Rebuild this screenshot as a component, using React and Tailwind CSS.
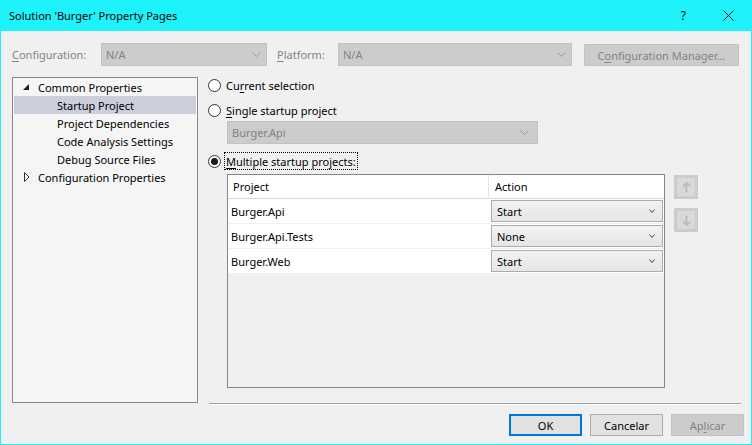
import React from "react";

function Chevron({ color = "#8a8a8a", w = 9, h = 5 }) {
  return (
    <svg width={w} height={h} viewBox={`0 0 ${w} ${h}`}>
      <polyline points={`0.5,0.5 ${w / 2},${h - 0.5} ${w - 0.5},0.5`} fill="none" stroke={color} strokeWidth="1" />
    </svg>
  );
}

function U({ children }) {
  return <span className="underline underline-offset-[2px] decoration-1">{children}</span>;
}

function Radio({ checked }) {
  return (
    <span className="w-[13px] h-[13px] rounded-full border border-[#333333] bg-white flex items-center justify-center shrink-0">
      {checked && <span className="w-[7px] h-[7px] rounded-full bg-[#1a1a1a]" />}
    </span>
  );
}

function DisabledCombo({ text, w }) {
  return (
    <div className={`${w} h-[23px] bg-[#cccccc] border border-[#c2c2c2] flex items-center pl-[4px] pr-[5px] text-[#838383]`}>
      <span>{text}</span>
      <span className="ml-auto flex"><Chevron color="#9a9a9a" /></span>
    </div>
  );
}

function ActionDrop({ text }) {
  return (
    <div className="ml-[2px] w-[172px] h-[22px] border border-[#acacac] bg-gradient-to-b from-[#f2f2f2] to-[#e5e5e5] flex items-center pl-[5px] pr-[7px]">
      <span>{text}</span>
      <span className="ml-auto flex"><Chevron color="#444444" w={6} h={4} /></span>
    </div>
  );
}

function Row({ name, action }) {
  return (
    <div className="h-[25px] bg-white border-b border-[#efefef] flex items-center">
      <div className="w-[261px] pl-[3px]">{name}</div>
      <ActionDrop text={action} />
    </div>
  );
}

function ArrowBtn({ up }) {
  return (
    <div className="w-[24px] h-[24px] bg-[#cccccc] flex items-center justify-center">
      <div className="w-[18px] h-[18px] bg-[#d9d9d9] flex items-center justify-center">
        <svg width="9" height="11" viewBox="0 0 9 11" style={{ transform: up ? "none" : "rotate(180deg)" }}>
          <path d="M4.5 1 L4.5 10.5 M1 4.5 L4.5 1 L8 4.5" fill="none" stroke="#bdbdbd" strokeWidth="2" />
        </svg>
      </div>
    </div>
  );
}

export default function App() {
  return (
    <div className="w-[752px] h-[445px] bg-[#1ef2fa] flex flex-col font-['Noto_Sans',sans-serif] text-[11px] leading-[15px] text-black overflow-hidden">
      {/* title bar */}
      <div className="h-[31px] flex items-center pl-[9px] shrink-0">
        <span className="text-[11px]">Solution 'Burger' Property Pages</span>
        <span className="ml-auto text-[12px] mr-[37px]">?</span>
        <svg width="11" height="11" viewBox="0 0 11 11" className="mr-[18px]">
          <path d="M0.5 0.5 L10.5 10.5 M10.5 0.5 L0.5 10.5" stroke="#111" strokeWidth="1" />
        </svg>
      </div>

      {/* body */}
      <div className="mx-[1px] mb-[1px] flex-1 bg-[#f0f0f0] flex flex-col">
        {/* top row */}
        <div className="mt-[12px] pl-[11px] flex items-start h-[23px]">
          <span className="w-[89px] h-[23px] flex items-center text-[#838383]"><span><U>C</U>onfiguration:</span></span>
          <DisabledCombo text="N/A" w="w-[166px]" />
          <span className="ml-[10px] w-[61px] h-[23px] flex items-center text-[#838383]"><span><U>P</U>latform:</span></span>
          <DisabledCombo text="N/A" w="w-[234px]" />
          <div className="ml-[12px] mt-[1px] w-[155px] h-[22px] bg-[#cccccc] border border-[#c2c2c2] flex items-center justify-center text-[#838383]">
            <span>C<U>o</U>nfiguration Manager...</span>
          </div>
        </div>

        {/* main */}
        <div className="mt-[11px] pl-[11px] flex gap-[10px] items-start">
          {/* tree */}
          <div className="w-[186px] h-[326px] border border-[#828790] bg-[#f5f5f5] flex flex-col">
            <div className="h-[18px] flex items-center">
              <span className="w-[25px] pl-[10px] flex">
                <svg width="6" height="6" viewBox="0 0 6 6"><polygon points="6,0 6,6 0,6" fill="#1e1e1e" /></svg>
              </span>
              <span>Common Properties</span>
            </div>
            <div className="h-[18px] mx-[1px] bg-[#cccedb] flex items-center pl-[43px]">Startup Project</div>
            <div className="h-[18px] flex items-center pl-[44px]">Project Dependencies</div>
            <div className="h-[18px] flex items-center pl-[44px]">Code Analysis Settings</div>
            <div className="h-[18px] flex items-center pl-[44px]">Debug Source Files</div>
            <div className="h-[18px] flex items-center">
              <span className="w-[25px] pl-[11px] flex">
                <svg width="6" height="10" viewBox="0 0 6 10"><polygon points="0.5,0.5 5,5 0.5,9.5" fill="none" stroke="#333" strokeWidth="1" /></svg>
              </span>
              <span>Configuration Properties</span>
            </div>
          </div>

          {/* right pane */}
          <div className="w-[533px] h-[328px] flex flex-col">
            <div className="h-[16px] flex items-center gap-[5px]">
              <Radio />
              <span>Cu<U>r</U>rent selection</span>
            </div>
            <div className="mt-[9px] h-[16px] flex items-center gap-[5px]">
              <Radio />
              <span><U>S</U>ingle startup project</span>
            </div>
            <div className="mt-[3px] ml-[19px] w-[311px] h-[23px] bg-[#cccccc] border border-[#c2c2c2] flex items-center pl-[4px] pr-[8px] text-[#838383]">
              <span>Burger.Api</span>
              <span className="ml-auto flex"><Chevron color="#9a9a9a" /></span>
            </div>
            <div className="mt-[8px] h-[18px] flex items-center">
              <Radio checked />
              <span className="ml-[3px] h-[18px] border border-dotted border-black px-[1px] flex items-center">
                <span><U>M</U>ultiple startup projects:</span>
              </span>
            </div>

            <div className="mt-[4px] flex items-start">
              <div className="ml-[19px] w-[438px] h-[214px] border border-[#828790] bg-[#f0f0f0] flex flex-col">
                <div className="h-[24px] bg-white border-b border-[#d5d5d5] flex">
                  <div className="w-[261px] pl-[5px] flex items-center border-r border-[#e5e5e5]">Project</div>
                  <div className="pl-[6px] flex items-center">Action</div>
                </div>
                <Row name="Burger.Api" action="Start" />
                <Row name="Burger.Api.Tests" action="None" />
                <Row name="Burger.Web" action="Start" />
              </div>
              <div className="ml-[9px] mt-[1px] flex flex-col gap-[9px]">
                <ArrowBtn up />
                <ArrowBtn />
              </div>
            </div>

            <div className="mt-auto ml-[1px] h-[2px] border-t border-[#a0a0a0] border-b border-b-white" />
          </div>
        </div>

        {/* buttons */}
        <div className="mt-[9px] pr-[7px] flex justify-end gap-[8px]">
          <div className="w-[73px] h-[22px] border-2 border-[#0078d7] bg-[#e1e1e1] flex items-center justify-center">OK</div>
          <div className="w-[73px] h-[22px] border border-[#adadad] bg-[#e1e1e1] flex items-center justify-center">Cancelar</div>
          <div className="w-[73px] h-[22px] border border-[#c2c2c2] bg-[#cccccc] flex items-center justify-center text-[#838383]">
            <span>Ap<U>l</U>icar</span>
          </div>
        </div>
      </div>
    </div>
  );
}
